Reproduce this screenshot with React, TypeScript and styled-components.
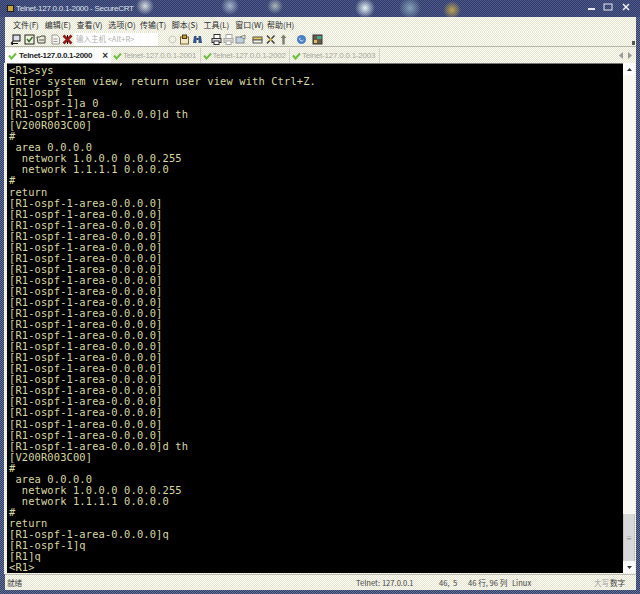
import React from "react";
import styled, { createGlobalStyle } from "styled-components";

const Global = createGlobalStyle`
  html, body { margin: 0; padding: 0; background: #3d4a78; }
  #root { width: 640px; height: 594px; overflow: hidden; }
`;

const dither = `
  background-color: #fdfdf6;
  background-image: repeating-conic-gradient(#e4e4d0 0 25%, #fdfdf6 0 50%);
  background-size: 2px 2px;
`;

const Win = styled.div`
  width: 640px;
  height: 594px;
  box-sizing: border-box;
  display: flex;
  flex-direction: column;
  font-family: "Noto Sans CJK SC", "Liberation Sans", sans-serif;
  background-color: #43507e;
  background-image: repeating-conic-gradient(#2f3b68 0 25%, #6a7698 0 50%);
  background-size: 2px 2px;
  padding: 0 4px 4px 4px;
`;

const TitleBar = styled.div`
  height: 17px;
  margin: 0 -4px;
  flex: none;
  display: flex;
  align-items: center;
  padding: 0 7px 0 7px;
  gap: 2px;
  background:
    radial-gradient(circle 9px at 145px 6px, #dfe6e4ee, transparent),
    radial-gradient(circle 9px at 230px 6px, #b4c6d8dd, transparent),
    radial-gradient(circle 8px at 275px 6px, #c4d0c8cc, transparent),
    radial-gradient(circle 10px at 365px 8px, #e6f2f4ff, transparent),
    radial-gradient(circle 11px at 410px 8px, #8aa8bcee, transparent),
    radial-gradient(circle 9px at 452px 10px, #c0a44cff, transparent),
    repeating-conic-gradient(#2e3a68 0 25%, #525c8c 0 50%) 0 0 / 2px 2px;
`;

const TitleText = styled.span`
  font-size: 8px;
  letter-spacing: -0.27px;
  line-height: 14px;
  color: #dfe3ea;
  font-family: "Liberation Sans", sans-serif;
  flex: 1;
`;

const WinButtons = styled.div`
  display: flex;
  align-items: center;
  gap: 6px;
  margin-top: -4px;
`;

const Chrome = styled.div`
  ${dither}
  flex: none;
  margin: 0 0 0 1px;
`;

const MenuBar = styled(Chrome)`
  height: 15px;
  display: flex;
  align-items: center;
  padding-left: 8px;
`;

const MenuItem = styled.span`
  width: 31.75px;
  flex: none;
  font-size: 8px;
  line-height: 12px;
  color: #2c2c2c;
  white-space: nowrap;
`;

const ToolBar = styled(Chrome)`
  height: 15px;
  display: flex;
  align-items: center;
  padding-left: 5px;
  border-bottom: 1px solid #b4b4aa;
  box-sizing: border-box;
  position: relative;
`;

const ToolIcon = styled.svg<{ $ml?: number }>`
  width: 11px;
  height: 11px;
  flex: none;
  margin-left: ${(p) => p.$ml ?? 0}px;
`;

const HostInput = styled.div`
  width: 84px;
  height: 13px;
  margin-left: 1px;
  background: #ffffff;
  font-size: 7.5px;
  line-height: 12px;
  color: #b0b0b0;
  padding-left: 2px;
  white-space: nowrap;
  box-sizing: border-box;
`;

const GripMark = styled.span`
  position: absolute;
  right: 1px;
  bottom: 1px;
  width: 3px;
  height: 4px;
  background: #555;
`;

const TabBar = styled(Chrome)`
  height: 16px;
  display: flex;
  align-items: flex-end;
  position: relative;
`;

const Tab = styled.div<{ $active?: boolean }>`
  height: 15px;
  display: flex;
  align-items: center;
  gap: ${(p) => (p.$active ? "2px" : "1px")};
  box-sizing: border-box;
  padding-left: ${(p) => (p.$active ? "3px" : "2px")};
  width: ${(p) => (p.$active ? "106px" : "89.5px")};
  background: ${(p) => (p.$active ? "#ffffff" : "transparent")};
  border-right: 1px solid ${(p) => (p.$active ? "transparent" : "#d2d2c8")};
  font-family: "Liberation Sans", sans-serif;
  font-size: 8px;
  letter-spacing: ${(p) => (p.$active ? "-0.3px" : "-0.22px")};
  font-weight: ${(p) => (p.$active ? "700" : "400")};
  color: ${(p) => (p.$active ? "#222" : "#a8a89c")};
  white-space: nowrap;
`;

const CloseMark = styled.span`
  font-size: 10px;
  font-weight: 700;
  color: #333;
  margin-left: 8px;
`;

const TabNav = styled.span`
  position: absolute;
  right: 4px;
  top: 5px;
  display: flex;
  gap: 3px;
`;

const Body = styled.div`
  flex: 1;
  min-height: 0;
  display: flex;
  ${dither}
  padding: 0 1px 1px 3px;
`;

const Terminal = styled.pre`
  flex: 1;
  margin: 0;
  background: #000;
  color: #d8d8a2;
  font-family: "DejaVu Sans Mono", monospace;
  font-size: 10.4px;
  letter-spacing: 0.14px;
  line-height: 11.04px;
  padding: 1px 0 0 2px;
  overflow: hidden;
  border-top: 1px solid #777;
`;

const ScrollBar = styled.div`
  width: 12px;
  flex: none;
  display: flex;
  flex-direction: column;
  align-items: stretch;
  background: #f8f8f0;
`;

const ScrollArrow = styled.div`
  height: 12px;
  flex: none;
  display: flex;
  align-items: center;
  justify-content: center;
  background: #fdfdfd;
`;

const ScrollTrack = styled.div`
  flex: 1;
  display: flex;
  flex-direction: column;
  justify-content: flex-end;
`;

const ScrollThumb = styled.div`
  height: 47px;
  background: #d8d8d8;
  border-left: 1px solid #c4c4c4;
  border-right: 1px solid #c4c4c4;
  display: flex;
  align-items: center;
  justify-content: center;
  font-size: 6px;
  color: #777;
`;

const StatusBar = styled(Chrome)`
  height: 16px;
  display: flex;
  align-items: center;
  font-size: 7.6px;
  border-top: 1px solid #c0c0b8;
  box-sizing: border-box;
`;

const Cell = styled.span<{ $w: number; $muted?: boolean; $pad?: number }>`
  width: ${(p) => p.$w}px;
  flex: none;
  box-sizing: border-box;
  padding-left: ${(p) => p.$pad ?? 0}px;
  white-space: nowrap;
  color: ${(p) => (p.$muted ? "#a0a098" : "#444")};
`;

const menus = ["文件(F)", "编辑(E)", "查看(V)", "选项(O)", "传输(T)", "脚本(S)", "工具(L)", "窗口(W)", "帮助(H)"];

const area = "[R1-ospf-1-area-0.0.0.0]";
const config = `[V200R003C00]
#
 area 0.0.0.0
  network 1.0.0.0 0.0.0.255
  network 1.1.1.1 0.0.0.0
#`;
const lines = [
  "<R1>sys",
  "Enter system view, return user view with Ctrl+Z.",
  "[R1]ospf 1",
  "[R1-ospf-1]a 0",
  `${area}d th`,
  config,
  "return",
  ...Array(22).fill(area),
  `${area}d th`,
  config,
  "return",
  `${area}q`,
  "[R1-ospf-1]q",
  "[R1]q",
  "<R1>",
].join("\n");

const Check = () => (
  <svg width="9" height="8" viewBox="0 0 9 8" style={{ flex: "none" }}>
    <path d="M1 3.5 L3.5 6.5 L8 1.5" fill="none" stroke="#6cc040" strokeWidth="2" />
  </svg>
);

const Sheet = ({ c, ml }: { c: string; ml?: number }) => (
  <ToolIcon $ml={ml} viewBox="0 0 11 11">
    <path d="M2 1 H7 L9.5 3.5 V10 H2 Z" fill="#f6f6ee" stroke={c} />
    <path d="M3.5 5h4M3.5 7.5h4" stroke={c} />
  </ToolIcon>
);

const Printer = ({ c, ml }: { c: string; ml?: number }) => (
  <ToolIcon $ml={ml} viewBox="0 0 11 11">
    <rect x="3" y="0.5" width="6" height="4" fill="#fff" stroke={c} />
    <rect x="1" y="4.5" width="9" height="4" fill="#ddd" stroke={c} />
    <rect x="3" y="7" width="5" height="3.5" fill="#fff" stroke={c} />
  </ToolIcon>
);

const App = () => (
  <Win>
    <Global />
    <TitleBar>
      <svg width="7" height="9" viewBox="0 0 7 9">
        <rect x="0.5" y="1.5" width="6" height="6" fill="#c9a53d" stroke="#222" />
      </svg>
      <TitleText>Telnet-127.0.0.1-2000 - SecureCRT</TitleText>
      <WinButtons>
        <svg width="10" height="8" viewBox="0 0 10 8"><rect x="1" y="5" width="7" height="2" fill="#e8e8ee" /></svg>
        <svg width="10" height="8" viewBox="0 0 10 8"><rect x="1" y="1" width="8" height="6" fill="none" stroke="#e8e8ee" /></svg>
        <svg width="14" height="8" viewBox="0 0 14 8"><path d="M4 1 L10 7 M10 1 L4 7" stroke="#f0f0f4" strokeWidth="1.5" /></svg>
      </WinButtons>
    </TitleBar>
    <MenuBar>
      {menus.map((m) => <MenuItem key={m}>{m}</MenuItem>)}
    </MenuBar>
    <ToolBar>
      <ToolIcon viewBox="0 0 11 11">
        <rect x="3" y="1" width="7" height="6" fill="#dde" stroke="#111" />
        <path d="M1 9.5 H8 M1 9.5 L3 7.5 M1 9.5 L3 10.8" stroke="#111" strokeWidth="1.2" fill="none" />
      </ToolIcon>
      <ToolIcon $ml={3} viewBox="0 0 11 11">
        <rect x="1" y="1" width="9" height="9" fill="#f4f4da" stroke="#222" />
        <path d="M3 5 L5 7.5 L8.5 3" stroke="#2d6a2d" strokeWidth="1.4" fill="none" />
      </ToolIcon>
      <ToolIcon $ml={1} viewBox="0 0 11 11">
        <path d="M1 3 H4 L5 2 H9 V9 H2 Z" fill="#ecebd4" stroke="#444" />
        <path d="M3 6 H8" stroke="#555" />
      </ToolIcon>
      <Sheet c="#999" ml={3} />
      <ToolIcon $ml={1} viewBox="0 0 11 11">
        <path d="M1.5 1.5 L9.5 9.5 M9.5 1.5 L1.5 9.5" stroke="#9c1818" strokeWidth="2.6" />
        <path d="M5.5 1 V4 M5.5 7 V10" stroke="#111" />
      </ToolIcon>
      <HostInput>输入主机 &lt;Alt+R&gt;</HostInput>
      <ToolIcon $ml={9} viewBox="0 0 11 11"><circle cx="5.5" cy="5.5" r="3.5" fill="none" stroke="#c8c8c0" /></ToolIcon>
      <ToolIcon $ml={1} viewBox="0 0 11 11">
        <rect x="1.5" y="3" width="8" height="7" fill="#f0e8c8" stroke="#7a6228" />
        <rect x="3.5" y="1" width="4" height="3.5" fill="#c89c30" stroke="#4a3a18" />
      </ToolIcon>
      <ToolIcon $ml={2} viewBox="0 0 11 11">
        <path d="M2 2 H4.5 V9 H1 Z M6.5 2 H9 L10 9 H6.5 Z" fill="#34558c" />
        <rect x="4.5" y="4" width="2" height="2" fill="#22365c" />
      </ToolIcon>
      <Printer c="#333" ml={8} />
      <Printer c="#a8a8a0" ml={1} />
      <ToolIcon $ml={1} viewBox="0 0 11 11">
        <rect x="1" y="3" width="8" height="6" fill="#c0d0e0" stroke="#808890" />
        <path d="M5 3 L10 1 V5 Z" fill="#e8e8e0" stroke="#888" />
      </ToolIcon>
      <ToolIcon $ml={6} viewBox="0 0 11 11">
        <rect x="1" y="3" width="9" height="3" fill="#e8c850" stroke="#555" />
        <rect x="1" y="6" width="9" height="3" fill="#f4f4ec" stroke="#555" />
      </ToolIcon>
      <ToolIcon $ml={2} viewBox="0 0 11 11">
        <path d="M2 1.5 L9.5 9.5 M9.5 1.5 L2 9.5" stroke="#444" strokeWidth="1.6" />
        <circle cx="5.5" cy="5.5" r="1.5" fill="#d8b840" />
      </ToolIcon>
      <ToolIcon $ml={2} viewBox="0 0 11 11"><path d="M5.5 0.5 L8.5 4 H6.7 V10.5 H4.3 V4 H2.5 Z" fill="#7c7c70" /></ToolIcon>
      <ToolIcon $ml={7} viewBox="0 0 11 11">
        <circle cx="5.5" cy="5.5" r="4.5" fill="#4a80c8" />
        <path d="M4 4 A2 2 0 1 0 7.5 6" fill="none" stroke="#dfeaf6" />
      </ToolIcon>
      <ToolIcon $ml={5} viewBox="0 0 11 11">
        <rect x="1" y="1" width="9" height="9" fill="#6c5a48" stroke="#333" />
        <rect x="5" y="2" width="4.5" height="3" fill="#3ca890" />
        <rect x="2" y="6" width="3" height="3" fill="#d8c060" />
      </ToolIcon>
      <GripMark />
    </ToolBar>
    <TabBar>
      <Tab $active><Check />Telnet-127.0.0.1-2000<CloseMark>×</CloseMark></Tab>
      <Tab><Check />Telnet-127.0.0.1-2001</Tab>
      <Tab><Check />Telnet-127.0.0.1-2002</Tab>
      <Tab><Check />Telnet-127.0.0.1-2003</Tab>
      <TabNav>
        <svg width="5" height="7" viewBox="0 0 5 7"><path d="M4 0 L0 3.5 L4 7Z" fill="#999" /></svg>
        <svg width="5" height="7" viewBox="0 0 5 7"><path d="M1 0 L5 3.5 L1 7Z" fill="#999" /></svg>
      </TabNav>
    </TabBar>
    <Body>
      <Terminal>{lines}</Terminal>
      <ScrollBar>
        <ScrollArrow><svg width="5" height="3" viewBox="0 0 5 3"><path d="M0 3 L2.5 0 L5 3Z" fill="#333" /></svg></ScrollArrow>
        <ScrollTrack><ScrollThumb>≡</ScrollThumb></ScrollTrack>
        <ScrollArrow><svg width="5" height="3" viewBox="0 0 5 3"><path d="M0 0 L2.5 3 L5 0Z" fill="#333" /></svg></ScrollArrow>
      </ScrollBar>
    </Body>
    <StatusBar>
      <Cell $w={351} $pad={2}>就绪</Cell>
      <Cell $w={83}>Telnet: 127.0.0.1</Cell>
      <Cell $w={29}>46,&nbsp;&nbsp;5</Cell>
      <Cell $w={44}>46 行, 96 列</Cell>
      <Cell $w={82}>Linux</Cell>
      <Cell $w={16} $muted>大写</Cell>
      <Cell $w={20}>数字</Cell>
    </StatusBar>
  </Win>
);

export default App;
